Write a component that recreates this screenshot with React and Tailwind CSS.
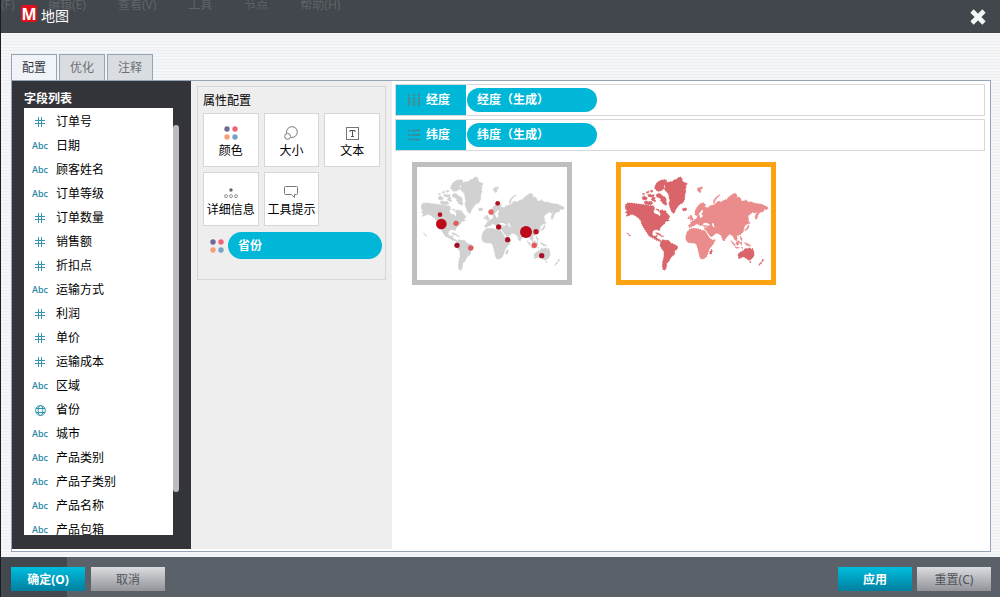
import React, { useState } from 'react';

const MENU = ['编辑(E)', '查看(V)', '工具', '节点', '帮助(H)'];
const TABS = ['配置', '优化', '注释'];

const FIELDS = [
  { name: '订单号', type: 'number' },
  { name: '日期', type: 'text' },
  { name: '顾客姓名', type: 'text' },
  { name: '订单等级', type: 'text' },
  { name: '订单数量', type: 'number' },
  { name: '销售额', type: 'number' },
  { name: '折扣点', type: 'number' },
  { name: '运输方式', type: 'text' },
  { name: '利润', type: 'number' },
  { name: '单价', type: 'number' },
  { name: '运输成本', type: 'number' },
  { name: '区域', type: 'text' },
  { name: '省份', type: 'geo' },
  { name: '城市', type: 'text' },
  { name: '产品类别', type: 'text' },
  { name: '产品子类别', type: 'text' },
  { name: '产品名称', type: 'text' },
  { name: '产品包箱', type: 'text' },
];

// -------------------------------------------------------------
// ICONS
// -------------------------------------------------------------
const FieldIcon = ({ type }) => {
  if (type === 'text') {
    return <span className="font-['Noto_Sans',sans-serif] text-[9px] font-medium text-[#1f84a3]">Abc</span>;
  }
  if (type === 'geo') {
    return (
      <svg width="11" height="11" viewBox="0 0 11 11" fill="none" stroke="#2f93ae">
        <circle cx="5.5" cy="5.5" r="4.9" />
        <ellipse cx="5.5" cy="5.5" rx="2.3" ry="4.9" />
        <path d="M1 3.5h9M1 7.5h9" />
      </svg>
    );
  }
  return (
    <svg width="10" height="10" viewBox="0 0 10 10" fill="none" stroke="#3a93b0">
      <path d="M3.5 0v10M6.5 0v10M0 3.5h10M0 6.5h10" />
    </svg>
  );
};

const ColorIcon = () => (
  <svg width="14" height="14" viewBox="0 0 14 14">
    <circle cx="3" cy="3" r="2.7" fill="#6f6a94" />
    <circle cx="11" cy="3" r="2.7" fill="#f0647a" />
    <circle cx="3" cy="11" r="2.7" fill="#f5a078" />
    <circle cx="11" cy="11" r="2.7" fill="#75a3c4" />
  </svg>
);

const SizeIcon = () => (
  <svg width="14" height="14" viewBox="0 0 14 14" fill="none" stroke="#777">
    <path d="M2.6 7A5.4 5.4 0 1 1 7 11.4" />
    <circle cx="3.6" cy="10.4" r="2.9" />
  </svg>
);

const TextIcon = () => (
  <svg width="13" height="13" viewBox="0 0 13 13" fill="none" stroke="#777">
    <rect x="0.5" y="0.5" width="12" height="12" />
    <path d="M4 5V3.5h5V5M6.5 3.5v6M5 9.5h3" stroke="#555" />
  </svg>
);

const DetailIcon = () => (
  <svg width="14" height="14" viewBox="0 0 14 14" fill="none" stroke="#888" strokeWidth="0.9">
    <circle cx="7" cy="5" r="1.7" fill="#666" stroke="none" />
    <circle cx="2" cy="11.2" r="1.5" />
    <circle cx="7" cy="11.2" r="1.5" />
    <circle cx="12" cy="11.2" r="1.5" />
  </svg>
);

const TooltipIcon = () => (
  <svg width="14" height="14" viewBox="0 0 14 14" fill="none" stroke="#777">
    <path d="M1.5 1.5h11q1 0 1 1v6q0 1-1 1h-2v3l-3-3h-6q-1 0-1-1v-6q0-1 1-1z" />
  </svg>
);

const ColumnsIcon = () => (
  <svg width="12" height="12" viewBox="0 0 12 12" stroke="#4a8a94" strokeWidth="2">
    <path d="M1 0v2M6 0v2M11 0v2M1 3v9M6 3v9M11 3v9" />
  </svg>
);

const RowsIcon = () => (
  <svg width="12" height="12" viewBox="0 0 12 12" stroke="#3f8791" strokeWidth="1.4">
    <path d="M0 1.5h2M3 1.5h9M0 6h2M3 6h9M0 10.5h2M3 10.5h9" />
  </svg>
);

const CARDS = [
  { label: '颜色', Icon: ColorIcon },
  { label: '大小', Icon: SizeIcon },
  { label: '文本', Icon: TextIcon },
  { label: '详细信息', Icon: DetailIcon },
  { label: '工具提示', Icon: TooltipIcon },
];

// -------------------------------------------------------------
// WORLD MAP
// -------------------------------------------------------------
const AMERICAS = [
  // north america
  'M46 150L52 144L64 144L78 146L94 148L108 150L120 152L130 152L134 160L130 170L136 176L144 178L148 186L152 178L148 168L156 164L162 168L166 166L170 174L176 180L180 186L174 192L178 198L168 198L164 206L156 212L150 220L148 228L144 224L136 224L129 227L126 237L131 244L139 242L142 237L144 238L139 247L144 252L152 255L150 259L140 256L130 250L118 244L110 232L102 220L96 210L92 196L84 188L74 181L64 178L56 182L48 184L52 176L46 172L52 166L46 162Z',
  // arctic islands
  'M97 127l6-5 4 4 5 1-2 7-7 1-6-2z',
  'M108 112l7-4 3 3-6 4zM121 107l6-2 2 5-6 2zM113 119l8-2 5 4 5-3 2 5-8 3-8 0zM97 117l5-3 2 3-4 2z',
  'M103 140l6-2 8 2 7-1 5 5-6 5-9 0-9-2zM126 128l6-3 4 4-3 5 5 3-4 4-5-4-5-2z',
  'M134 100l2-10 7-9 9-5 10-2 8 1-1 7-5 5-3 8 2 5-7 6-8 3-7-1z',
  'M139 119l6-4 7 2 6 6 8 4 3 7-1 6 3 7-5 5-2-5-6-1-2-6-5-3 2-5-6-4-7-2z',
  'M138 163l6-1 4 5-4 3-6-2z',
  // greenland
  'M163 88L168 82L178 81L188 79L193 74L200 73L204 68L212 66L216 70L217 77L221 82L230 84L232 88L226 92L229 98L226 102L228 110L225 116L224 130L222 138L217 145L210 147L204 154L200 160L196 166L194 173L189 175L184 169L181 160L178 152L177 143L180 137L177 130L177 122L174 115L167 108L162 101L166 96Z',
  // iceland
  'M217 162l4-2 6-1 4 3-2 4-6 2-5-2z',
  // hawaii, caribbean
  'M137 234l6-1 6 3 5 4-5 1-6-4zM152 242l6 0 3 2-6 1zM50 234l4 2M54 236l5 3 3 5-4-2z',
  // south america
  'M152 260L158 254L166 256L176 256L182 264L192 268L203 274L202 282L194 288L194 298L186 304L180 312L176 320L170 324L170 334L166 345L159 344L157 334L158 320L162 304L162 290L156 282L150 272Z',
];

const EURASIA = [
  // europe and asia
  'M255 180L255 168L262 155L270 146L280 143L287 149L283 156L294 158L300 152L310 150L316 148L320 142L328 138L332 142L338 138L344 134L350 134L356 126L362 122L370 116L376 115L382 122L378 128L386 126L392 130L394 138L402 138L408 134L414 142L422 140L432 144L444 146L456 148L464 152L473 156L474 161L468 164L462 162L460 170L450 172L444 180L442 188L438 194L435 186L438 178L444 172L436 174L428 172L420 178L414 184L416 194L414 204L408 210L404 212L402 220L400 230L394 236L388 240L380 242L382 250L380 258L374 254L370 246L365 240L358 238L352 244L346 252L342 258L337 252L334 242L326 236L318 235L312 240L304 246L298 248L292 236L286 224L282 220L292 217L294 214L282 216L276 210L270 212L265 208L258 206L254 212L246 214L238 219L236 210L242 208L242 202L248 198L254 194L260 190L264 182Z',
  // british isles, svalbard, novaya zemlya
  'M241 190l-2-5 3-5 4 3 1 5 3 4-2 4-6 0zM234 186l4 0 0 5-4 1z',
  'M262 101l4-4 4 2 3-4 5 2-2 4-4 3 1 4-3 6-3-4-4-3zM311 146l-1-6 3-7 5-6 6-5 5-3 1 2-6 4-5 6-4 6-1 6z',
  // japan, philippines, indonesia
  'M404 226l4-5 4-3 1-6 3-3 1 7-3 5-4 3-4 3zM412 205l1-5 5 1 3 3-5 2zM389 234l3-2 1 4-3 2zM390 245l3 0 2 5 2 5-3 1-3-5z',
  'M363 257l4 3 5 5 4 6 0 3-5-4-4-5zM378 263l6-5 4-1 1 5-3 6-4 3-4-3zM391 262l5-1 0 3-2 2 2 4-3 0zM376 276l8 1 5 1-4 2-8-1zM393 278l6 0 0 1-6 0zM403 264l5-1 6 4 6 3 3 4-6-2-6 0-4-5zM339 250l3 2-1 5-3-1z',
  // africa
  'M232 230L228 241L227 251L232 261L242 264L254 264L260 270L263 280L266 292L268 302L272 311L280 312L288 307L293 298L296 286L302 276L310 268L314 258L317 254L306 255L300 248L294 238L288 227L276 226L264 221L250 220L240 222Z',
];

const ISLES = [
  // madagascar
  'M300 297l-1-6 3-4 3-4 2 4-2 7-2 4z',
  // australia, tasmania, new zealand
  'M386 310L384 298L390 292L400 287L406 280L413 282L416 278L422 280L423 284L427 279L432 291L432 303L424 313L416 316L410 311L400 305L392 309Z',
  'M419 320l4-1 0 3-3 1zM457 313l4 1-2 5-3 1zM453 321l3 2-5 5-3 3-2-2 4-4z',
];

const WorldMap = ({ americas, eurasia, isles, children }) => (
  <svg className="block w-full" viewBox="33 36 450 339" strokeWidth="3" strokeDasharray="3 4">
    <g fill={americas} stroke={americas}>
      {AMERICAS.map((d, i) => <path key={i} d={d} />)}
    </g>
    <g fill={eurasia} stroke={eurasia}>
      {EURASIA.map((d, i) => <path key={i} d={d} />)}
    </g>
    <g fill={isles} stroke={isles}>
      {ISLES.map((d, i) => <path key={i} d={d} />)}
    </g>
    {/* inland seas */}
    <g fill="#fff">
      <path d="M276 165l3 0-2 8-3 5 5 4-3 4-6 3 0-6-4-5 5-7zM279 206l6-3 8 2 8 4-6 3-8-1-7 1zM307 204l5 2-1 5 4 6-5-1-4-7zM284 224l4 2 5 8 6 8 8 6-2 4-6-3-6-9-5-9zM136 167l5-3 5 6-2 8-6-1-5-4z" />
    </g>
    {children}
  </svg>
);

const BUBBLES = [
  { x: 102, y: 179, r: 7, color: '#b5121f' },
  { x: 106, y: 207, r: 16, color: '#bd0a1b' },
  { x: 150, y: 205, r: 8, color: '#df5d5d' },
  { x: 153, y: 271, r: 8, color: '#a80f28' },
  { x: 194, y: 279, r: 8, color: '#e05a5c' },
  { x: 275, y: 145, r: 7, color: '#b50f20' },
  { x: 255, y: 171, r: 8, color: '#ea6160' },
  { x: 278, y: 216, r: 8, color: '#b00f22' },
  { x: 305, y: 254, r: 8, color: '#a80f28' },
  { x: 360, y: 231, r: 18, color: '#bd0a1b' },
  { x: 390, y: 230, r: 8, color: '#b81525' },
  { x: 385, y: 271, r: 8, color: '#e85553' },
  { x: 407, y: 302, r: 8, color: '#a80f28' },
];

// -------------------------------------------------------------
// PANELS
// -------------------------------------------------------------
const FieldList = () => (
  <aside className="flex w-[179px] shrink-0 flex-col bg-[#333439] pb-3.5 pl-3">
    <h2 className="pt-2 text-xs leading-[19px] font-bold text-white">字段列表</h2>
    <div className="flex min-h-0 flex-1">
      <ul className="w-[149px] overflow-y-auto bg-white pt-0.5 [scrollbar-width:none]">
        {FIELDS.map((field) => (
          <li key={field.name} className="flex h-6 items-center gap-2 pl-2 text-xs text-black">
            <span className="flex w-4 justify-center"><FieldIcon type={field.type} /></span>
            {field.name}
          </li>
        ))}
      </ul>
      <div className="mt-[17px] h-[86%] w-1.5 rounded-full bg-[#bcbcbc]" />
    </div>
  </aside>
);

const MarksPanel = () => (
  <section className="w-[201px] shrink-0 bg-[#eee] p-1.5 pt-[5px]">
    <div className="border border-[#d6d6d6] pb-5">
      <h2 className="pt-[5px] pl-[5px] text-xs leading-[18px] text-black">属性配置</h2>
      <div className="mt-[3px] grid grid-cols-3 gap-[5px] px-[5px]">
        {CARDS.map(({ label, Icon }) => (
          <button
            key={label}
            className="flex h-[54px] flex-col items-center justify-center border border-[#d6d6d6] bg-white pt-1 text-xs leading-[18px] whitespace-nowrap text-black"
          >
            <span className="flex h-[18px] items-center"><Icon /></span>
            {label}
          </button>
        ))}
      </div>
      <div className="mt-1.5 flex items-center gap-1 pr-[3px] pl-3">
        <ColorIcon />
        <button className="h-[27px] flex-1 rounded-full bg-[#00b7d8] px-2.5 pt-px text-left text-xs font-bold text-white">
          省份
        </button>
      </div>
    </div>
  </section>
);

const Shelf = ({ label, icon, value }) => (
  <div className="flex h-8 items-center gap-px border border-[#d8d8d8] bg-white">
    <span className="flex h-full w-[70px] items-center gap-1.5 bg-[#00b7d8] pl-3 text-xs font-bold text-white">
      {icon}
      {label}
    </span>
    <button className="h-6 w-[130px] rounded-full bg-[#00b7d8] px-2.5 text-left text-xs font-bold text-white">
      {value}
    </button>
  </div>
);

const PRIMARY = 'h-6 w-[74px] bg-linear-to-b from-[#00bede] to-[#007f9f] pt-px text-xs font-bold text-white';
const SECONDARY = 'h-6 w-[74px] bg-linear-to-b from-[#dcdde0] to-[#92949a] pt-px text-xs text-[#50545a]';

const App = () => {
  const [activeTab, setActiveTab] = useState('配置');
  const [mapType, setMapType] = useState('filled');

  return (
    <div className="flex h-screen flex-col border-l border-[#1c1d20] bg-[#f3f4f7] font-['Noto_Sans','Noto_Sans_CJK_SC',sans-serif]">

      {/* Title bar over the dimmed menu */}
      <header className="relative flex h-[33px] shrink-0 items-center justify-between overflow-hidden bg-[#41474c] pr-3.5 pl-5">
        <div className="absolute top-0 left-0 flex h-2.5 items-center gap-8 text-xs text-[#5f6468]">
          <span className="w-[15px]">(F)</span>
          {MENU.map((item) => <span key={item}>{item}</span>)}
        </div>
        <h1 className="relative flex items-center gap-1 pb-0.5 text-sm text-white">
          <span className="mb-1 flex h-[17px] w-4 items-center justify-center rounded-xs bg-[#e3101c] text-base leading-4 font-bold">M</span>
          地图
        </h1>
        <button aria-label="关闭" className="relative">
          <svg width="16" height="16" viewBox="0 0 16 16" stroke="#f4f5f5" strokeWidth="4.6">
            <path d="M2 2l12 12M14 2L2 14" />
          </svg>
        </button>
      </header>

      <main className="flex min-h-0 flex-1 flex-col bg-[repeating-linear-gradient(#f5f6f8_0_2px,#eceef1_2px_3px)] pt-[21px] pr-[9px] pb-[5px] pl-2.5">
        {/* Tabs */}
        <div role="tablist" className="flex shrink-0 gap-0.5">
          {TABS.map((tab) => (
            <button
              key={tab}
              role="tab"
              aria-selected={activeTab === tab}
              onClick={() => setActiveTab(tab)}
              className={`h-[26px] w-[46px] border border-b-0 border-[#93a5b7] text-xs ${
                activeTab === tab ? 'bg-[#f0f4f9] text-[#33383e]' : 'bg-[#d9dce0] text-[#6c7076]'
              }`}
            >
              {tab}
            </button>
          ))}
        </div>

        <div className="flex min-h-0 flex-1 border border-[#93a5b7] bg-white pb-0.5">
          <FieldList />
          <MarksPanel />

          <section className="min-w-0 flex-1 pt-[3px] pr-[5px] pl-[3px]">
            <div className="flex flex-col gap-[3px]">
              <Shelf label="经度" icon={<ColumnsIcon />} value="经度（生成）" />
              <Shelf label="纬度" icon={<RowsIcon />} value="纬度（生成）" />
            </div>

            {/* Map types */}
            <div className="mt-[11px] flex gap-11 pl-[17px]">
              <button
                aria-pressed={mapType === 'bubble'}
                onClick={() => setMapType('bubble')}
                className={`w-40 border-5 bg-white ${mapType === 'bubble' ? 'border-[#fca30f]' : 'border-[#bfbfbf]'}`}
              >
                <WorldMap americas="#d1d1d1" eurasia="#d1d1d1" isles="#d1d1d1">
                  {BUBBLES.map(({ x, y, r, color }) => (
                    <circle key={`${x}-${y}`} cx={x} cy={y} r={r} fill={color} />
                  ))}
                </WorldMap>
              </button>
              <button
                aria-pressed={mapType === 'filled'}
                onClick={() => setMapType('filled')}
                className={`w-40 border-5 bg-white ${mapType === 'filled' ? 'border-[#fca30f]' : 'border-[#bfbfbf]'}`}
              >
                <WorldMap americas="#d9646a" eurasia="#ea8b8c" isles="#d9646a" />
              </button>
            </div>
          </section>
        </div>
      </main>

      <footer className="flex h-10 shrink-0 items-center justify-between bg-[linear-gradient(to_right,#42484d_66px,#5b6168_66px)] pt-1 pr-[9px] pl-2.5">
        <div className="flex gap-1.5">
          <button className={PRIMARY}>确定(O)</button>
          <button className={SECONDARY}>取消</button>
        </div>
        <div className="flex gap-[5px]">
          <button className={PRIMARY}>应用</button>
          <button className={SECONDARY}>重置(C)</button>
        </div>
      </footer>
    </div>
  );
};

export default App;
